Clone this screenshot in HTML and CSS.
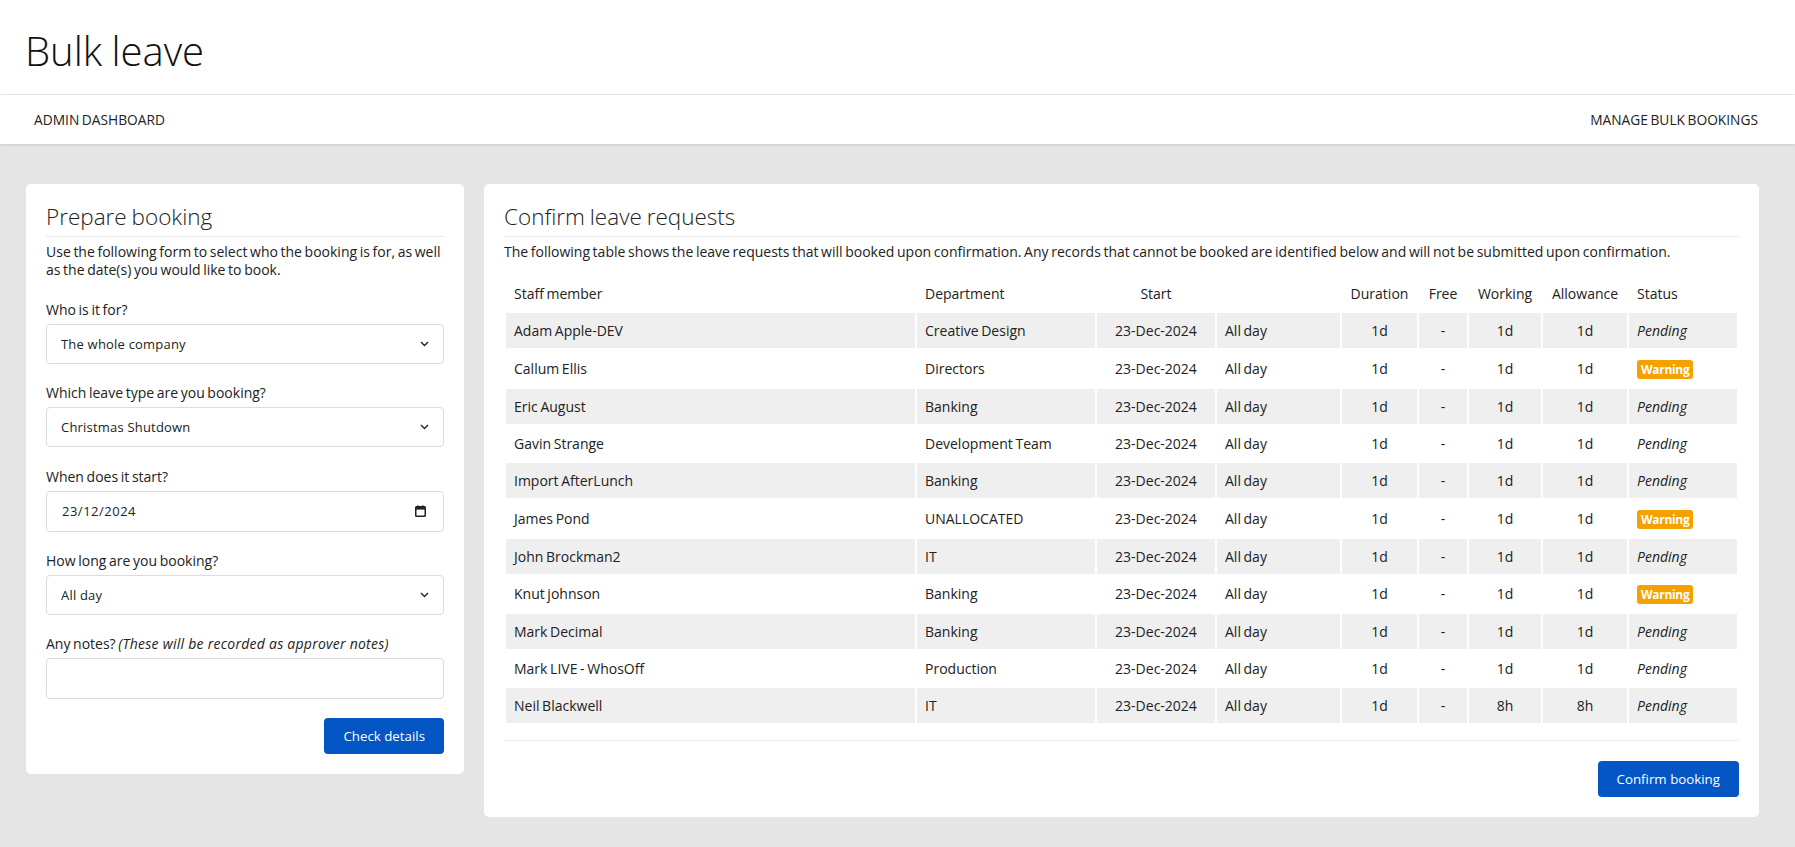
FILE: index.html
```html
<!DOCTYPE html>
<html lang="en">
<head>
<meta charset="utf-8">
<title>Bulk leave</title>
<link rel="stylesheet" href="styles.css">
</head>
<body>
<header class="page-header">
  <h1 class="page-title">Bulk leave</h1>
</header>
<nav class="top-nav">
  <a class="nav-link" href="#">ADMIN DASHBOARD</a>
  <a class="nav-link" href="#">MANAGE BULK BOOKINGS</a>
</nav>
<main class="content">
  <section class="card prepare">
    <h2 class="card-title">Prepare booking</h2>
    <p class="intro intro-form">Use the following form to select who the booking is for, as well as the date(s) you would like to book.</p>
    <div class="field">
      <label class="field-label">Who is it for?</label>
      <div class="control">
        <select class="input select"><option>The whole company</option></select>
        <svg class="chevron" width="9" height="6" viewBox="0 0 9 6"><path d="M1 1l3.5 3.5L8 1" fill="none" stroke="#222" stroke-width="1.4"/></svg>
      </div>
    </div>
    <div class="field">
      <label class="field-label">Which leave type are you booking?</label>
      <div class="control">
        <select class="input select"><option>Christmas Shutdown</option></select>
        <svg class="chevron" width="9" height="6" viewBox="0 0 9 6"><path d="M1 1l3.5 3.5L8 1" fill="none" stroke="#222" stroke-width="1.4"/></svg>
      </div>
    </div>
    <div class="field">
      <label class="field-label">When does it start?</label>
      <div class="control">
        <input class="input date" type="text" value="23/12/2024">
        <svg class="calendar" width="11" height="12" viewBox="0 0 11 12"><rect x="0.75" y="1.75" width="9.5" height="9.5" rx="0.8" fill="none" stroke="#222" stroke-width="1.5"/><rect x="1" y="2" width="9" height="2.6" fill="#222"/><rect x="2.4" y="0.4" width="1.4" height="2" fill="#222"/><rect x="7.2" y="0.4" width="1.4" height="2" fill="#222"/></svg>
      </div>
    </div>
    <div class="field">
      <label class="field-label">How long are you booking?</label>
      <div class="control">
        <select class="input select"><option>All day</option></select>
        <svg class="chevron" width="9" height="6" viewBox="0 0 9 6"><path d="M1 1l3.5 3.5L8 1" fill="none" stroke="#222" stroke-width="1.4"/></svg>
      </div>
    </div>
    <div class="field field-last">
      <label class="field-label">Any notes? <em class="hint">(These will be recorded as approver notes)</em></label>
      <div class="control">
        <input class="input notes" type="text" value="">
      </div>
    </div>
    <div class="actions">
      <button class="btn" type="button">Check details</button>
    </div>
  </section>

  <section class="card confirm">
    <h2 class="card-title">Confirm leave requests</h2>
    <p class="intro intro-table">The following table shows the leave requests that will booked upon confirmation. Any records that cannot be booked are identified below and will not be submitted upon confirmation.</p>
    <table class="requests">
      <colgroup>
        <col class="c-staff"><col class="c-dept"><col class="c-start"><col class="c-part"><col class="c-dur"><col class="c-free"><col class="c-work"><col class="c-allow"><col class="c-status">
      </colgroup>
      <thead>
        <tr><th>Staff member</th><th>Department</th><th class="center">Start</th><th></th><th class="center">Duration</th><th class="center">Free</th><th class="center">Working</th><th class="center">Allowance</th><th>Status</th></tr>
      </thead>
      <tbody>
        <tr><td>Adam Apple-DEV</td><td>Creative Design</td><td class="center">23-Dec-2024</td><td>All day</td><td class="center">1d</td><td class="center">-</td><td class="center">1d</td><td class="center">1d</td><td class="status">Pending</td></tr>
        <tr><td>Callum Ellis</td><td>Directors</td><td class="center">23-Dec-2024</td><td>All day</td><td class="center">1d</td><td class="center">-</td><td class="center">1d</td><td class="center">1d</td><td><span class="badge">Warning</span></td></tr>
        <tr><td>Eric August</td><td>Banking</td><td class="center">23-Dec-2024</td><td>All day</td><td class="center">1d</td><td class="center">-</td><td class="center">1d</td><td class="center">1d</td><td class="status">Pending</td></tr>
        <tr><td>Gavin Strange</td><td>Development Team</td><td class="center">23-Dec-2024</td><td>All day</td><td class="center">1d</td><td class="center">-</td><td class="center">1d</td><td class="center">1d</td><td class="status">Pending</td></tr>
        <tr><td>Import AfterLunch</td><td>Banking</td><td class="center">23-Dec-2024</td><td>All day</td><td class="center">1d</td><td class="center">-</td><td class="center">1d</td><td class="center">1d</td><td class="status">Pending</td></tr>
        <tr><td>James Pond</td><td>UNALLOCATED</td><td class="center">23-Dec-2024</td><td>All day</td><td class="center">1d</td><td class="center">-</td><td class="center">1d</td><td class="center">1d</td><td><span class="badge">Warning</span></td></tr>
        <tr><td>John Brockman2</td><td>IT</td><td class="center">23-Dec-2024</td><td>All day</td><td class="center">1d</td><td class="center">-</td><td class="center">1d</td><td class="center">1d</td><td class="status">Pending</td></tr>
        <tr><td>Knut johnson</td><td>Banking</td><td class="center">23-Dec-2024</td><td>All day</td><td class="center">1d</td><td class="center">-</td><td class="center">1d</td><td class="center">1d</td><td><span class="badge">Warning</span></td></tr>
        <tr><td>Mark Decimal</td><td>Banking</td><td class="center">23-Dec-2024</td><td>All day</td><td class="center">1d</td><td class="center">-</td><td class="center">1d</td><td class="center">1d</td><td class="status">Pending</td></tr>
        <tr><td>Mark LIVE - WhosOff</td><td>Production</td><td class="center">23-Dec-2024</td><td>All day</td><td class="center">1d</td><td class="center">-</td><td class="center">1d</td><td class="center">1d</td><td class="status">Pending</td></tr>
        <tr><td>Neil Blackwell</td><td>IT</td><td class="center">23-Dec-2024</td><td>All day</td><td class="center">1d</td><td class="center">-</td><td class="center">8h</td><td class="center">8h</td><td class="status">Pending</td></tr>
      </tbody>
    </table>
    <div class="card-footer">
      <button class="btn" type="button">Confirm booking</button>
    </div>
  </section>
</main>
</body>
</html>
```

FILE: styles.css
```css
* { box-sizing: border-box; }

html, body {
  margin: 0;
  padding: 0;
}

body {
  font-family: "Open Sans", "Noto Sans", sans-serif;
  font-size: 14px;
  word-spacing: -1px;
  color: #222;
  background: #e5e5e5;
  min-height: 847px;
}

.page-header {
  background: #fff;
  height: 95px;
  padding: 26px 0 0 25px;
  border-bottom: 1px solid #ececec;
}

.page-title {
  margin: 0;
  font-weight: 300;
  font-size: 40px;
  line-height: 50px;
  color: #111;
}

.top-nav {
  background: #fff;
  height: 49px;
  display: flex;
  align-items: center;
  justify-content: space-between;
  padding: 0 37px 0 34px;
  box-shadow: 0 1px 3px rgba(0, 0, 0, 0.12);
  position: relative;
}

.nav-link {
  font-size: 13.75px;
  color: #222;
  text-decoration: none;
}

.content {
  display: grid;
  grid-template-columns: 438px 1fr;
  gap: 20px;
  align-items: start;
  padding: 40px 36px 30px 26px;
}

.card {
  background: #fff;
  border-radius: 5px;
  padding: 20px;
}

.card-title {
  margin: 0;
  font-weight: 300;
  font-size: 22.5px;
  line-height: 26px;
  padding-bottom: 6px;
  border-bottom: 1px solid #e8e8e8;
  color: #222;
}

.intro {
  margin: 6px 0 0;
  line-height: 18px;
}

.intro-form { margin-bottom: 22px; }
.intro-table { margin-bottom: 13px; }

.field { margin-bottom: 20.3px; }
.field-last { margin-bottom: 19px; }

.field-label {
  display: block;
  line-height: 18px;
  margin-bottom: 5px;
}

.hint {
  word-spacing: normal;
  letter-spacing: 0.25px;
}

.control { position: relative; }

.input {
  display: block;
  width: 100%;
  height: 40px;
  border: 1px solid #dcdcdc;
  border-radius: 4px;
  background: #fff;
  font-family: "Open Sans", "Noto Sans", sans-serif;
  font-size: 13px;
  word-spacing: normal;
  color: #222;
  padding: 0 30px 0 14px;
  outline: none;
}

.select {
  -webkit-appearance: none;
  appearance: none;
  letter-spacing: 0.2px;
}

.date { letter-spacing: 0.5px; padding-left: 15px; height: 41px; }
.notes { height: 41px; }

.chevron {
  position: absolute;
  right: 15px;
  top: 17px;
  pointer-events: none;
}

.calendar {
  position: absolute;
  right: 18px;
  top: 14px;
  pointer-events: none;
}

.actions {
  display: flex;
  justify-content: flex-end;
}

.btn {
  height: 36px;
  padding: 0 19px;
  border: none;
  border-radius: 4px;
  background: #0356c4;
  color: #fff;
  font-family: "Open Sans", "Noto Sans", sans-serif;
  font-size: 13.3px;
  word-spacing: normal;
  cursor: pointer;
}

.requests {
  width: 100%;
  table-layout: fixed;
  border-collapse: separate;
  border-spacing: 2px;
}

.c-staff { width: 409px; }
.c-dept { width: 178px; }
.c-start { width: 118px; }
.c-part { width: 123px; }
.c-dur { width: 75px; }
.c-free { width: 48px; }
.c-work { width: 72px; }
.c-allow { width: 84px; }

.requests th,
.requests td {
  padding: 8px;
  line-height: 19px;
  font-weight: 400;
  text-align: left;
  white-space: nowrap;
}

.requests .center { text-align: center; }

.requests tbody tr:nth-child(odd) td { background: #efefef; }

.status { font-style: italic; }

.badge {
  display: inline-block;
  background: #f5a100;
  color: #fff;
  font-weight: 700;
  font-size: 12px;
  line-height: 15px;
  padding: 2px 4px;
  border-radius: 3px;
  letter-spacing: -0.3px;
  vertical-align: middle;
}

.card-footer {
  margin-top: 15px;
  border-top: 1px solid #ececec;
  padding-top: 20px;
  display: flex;
  justify-content: flex-end;
}
```
